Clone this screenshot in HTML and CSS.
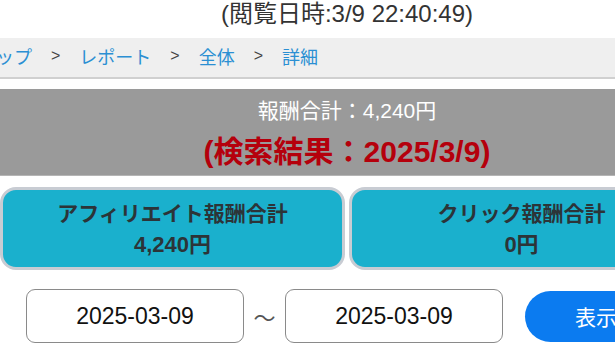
FILE: index.html
```html
<!DOCTYPE html>
<html lang="ja">
<head>
    <meta charset="UTF-8">
    <meta name="viewport" content="width=device-width, initial-scale=1.0">
    <title>報酬レポート詳細</title>
    <link rel="stylesheet" href="styles.css">
</head>
<body>
    <div class="page">
        <div class="viewed">(閲覧日時:3/9 22:40:49)</div>
        <nav class="crumbs">
            <a href="#">トップ</a>
            <span class="sep">&gt;</span>
            <a href="#">レポート</a>
            <span class="sep">&gt;</span>
            <a href="#">全体</a>
            <span class="sep">&gt;</span>
            <a href="#">詳細</a>
        </nav>
        <div class="summary">
            <div class="total">報酬合計：4,240円</div>
            <div class="result">(検索結果：2025/3/9)</div>
        </div>
        <div class="cards">
            <div class="card">
                <div class="card-title">アフィリエイト報酬合計</div>
                <div class="card-value">4,240円</div>
            </div>
            <div class="card">
                <div class="card-title">クリック報酬合計</div>
                <div class="card-value">0円</div>
            </div>
        </div>
        <form class="range">
            <input class="date" type="text" value="2025-03-09">
            <span class="tilde">〜</span>
            <input class="date" type="text" value="2025-03-09">
            <button type="submit">表示</button>
        </form>
    </div>
</body>
</html>
```

FILE: styles.css
```css
body {
    margin: 0;
    padding: 0;
    overflow: hidden;
    font-family: "Liberation Sans", "Noto Sans CJK JP", sans-serif;
    color: #333;
    background: #fff;
}
.page {
    width: 694px;
}
.viewed {
    height: 38px;
    line-height: 27px;
    text-align: center;
    font-size: 24px;
    color: #333;
}
.crumbs {
    height: 41px;
    background: #efefef;
    border-bottom: 2px solid #d0d0d0;
    display: flex;
    align-items: center;
    gap: 19px;
    padding-bottom: 3px;
    box-sizing: border-box;
    font-size: 18px;
}
.crumbs a:first-child {
    margin-left: -22px;
}
.crumbs a {
    color: #2b8fd3;
    text-decoration: none;
}
.crumbs .sep {
    color: #444;
    font-size: 16px;
}
.summary {
    margin-top: 10px;
    height: 86px;
    background: #9a9a9a;
    border-bottom: 1px solid #b5b5b5;
    display: flex;
    flex-direction: column;
    align-items: center;
    justify-content: center;
    gap: 3px;
}
.total {
    color: #fff;
    font-size: 21px;
}
.result {
    color: #b5000c;
    font-size: 30px;
    font-weight: bold;
}
.cards {
    margin-top: 11px;
    display: grid;
    grid-template-columns: 1fr 1fr;
    gap: 4px;
}
.card {
    height: 77px;
    background: #1ab0cd;
    border: 3px solid #c8ccd3;
    border-radius: 16px;
    display: flex;
    flex-direction: column;
    align-items: center;
    justify-content: center;
    color: #2c3438;
    font-weight: bold;
    font-size: 21px;
    line-height: 31px;
}
.card-value {
    font-size: 22px;
}
.range {
    margin: 19px 0 0;
    padding-left: 26px;
    display: flex;
    align-items: center;
}
.date {
    box-sizing: border-box;
    width: 218px;
    height: 54px;
    border: 1.5px solid #8a8a8a;
    border-radius: 9px;
    text-align: center;
    font-family: "Liberation Sans", sans-serif;
    font-size: 23px;
    color: #111;
    background: #fff;
    padding: 0;
}
.tilde {
    width: 41px;
    text-align: center;
    font-size: 22px;
    color: #555;
}
button {
    margin-left: 22px;
    width: 150px;
    height: 51px;
    border: none;
    border-radius: 26px;
    background: #0b7bf0;
    color: #fff;
    font-size: 21px;
    font-family: "Liberation Sans", "Noto Sans CJK JP", sans-serif;
    text-align: left;
    padding-left: 50px;
    cursor: pointer;
}
```
